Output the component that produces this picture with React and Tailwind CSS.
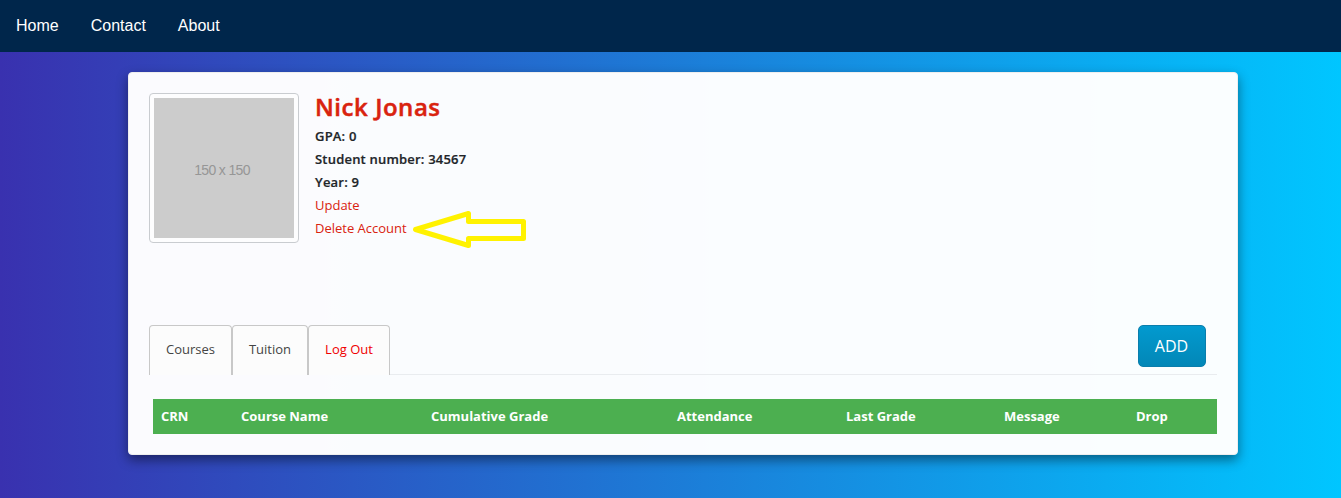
const details = ['GPA: 0', 'Student number: 34567', 'Year: 9'];

const columns = [
  ['CRN', 'w-[80px]'],
  ['Course Name', 'w-[190px]'],
  ['Cumulative Grade', 'w-[246px]'],
  ['Attendance', 'w-[169px]'],
  ['Last Grade', 'w-[158px]'],
  ['Message', 'w-[132px]'],
  ['Drop', 'w-[89px]'],
];

function NavBar() {
  return (
    <nav className="flex h-[52px] items-center gap-8 bg-[#00264b] px-4 font-['Liberation_Sans',sans-serif] text-base text-white">
      <a href="#home">Home</a>
      <a href="#contact">Contact</a>
      <a href="#about">About</a>
    </nav>
  );
}

function Arrow() {
  return (
    <svg className="absolute top-[117px] left-[262px]" width="120" height="42" viewBox="0 0 120 42" fill="none" stroke="#fff200" strokeWidth="5" strokeLinejoin="round">
      <path d="M4.500 19.500L57.500 3.500V11.500H112.500V28.500H57.500V35.500Z" />
    </svg>
  );
}

function Profile() {
  return (
    <section className="relative flex h-[232px] gap-4">
      <div className="size-[150px] shrink-0 rounded-[4px] border border-[#c9ccd0] bg-[#fdfdfe] p-1">
        <div className="flex size-full items-center justify-center bg-[#ccc] pt-[5px] pr-[4px] font-['Liberation_Sans',sans-serif] text-[14px] tracking-[-0.65px] text-[#969696]">
          150 x 150
        </div>
      </div>
      <div className="leading-[23px]">
        <h1 className="mb-[4px] h-[28px] text-2xl leading-[28px] font-semibold tracking-[0.55px] text-[#d9230f] [-webkit-text-stroke:0.5px_#d9230f]">Nick Jonas</h1>
        {details.map((line) => (
          <p key={line} className="font-semibold tracking-[0.2px] [-webkit-text-stroke:0.2px_#212529]">{line}</p>
        ))}
        <p><a href="#update" className="text-[#d9230f]">Update</a></p>
        <p><a href="#delete" className="text-[#d9230f]">Delete Account</a></p>
      </div>
      <Arrow />
    </section>
  );
}

function Tabs() {
  const tab = 'h-[50px] rounded-t-[4px] border border-b-0 border-[#c8c8c8] bg-[#fcfcfc] pb-[3px] text-center leading-[46px]';
  return (
    <div className="relative flex h-[50px] border-b border-[#e9ecef] text-[#444]">
      <button className={`${tab} w-[83px]`}>Courses</button>
      <button className={`${tab} w-[76px]`}>Tuition</button>
      <button className={`${tab} w-[82px] text-[#f00000]`}>Log Out</button>
      <button className="mr-[11px] ml-auto h-[42px] w-[68px] rounded-[5px] border border-[#0a7eac] bg-linear-to-b from-[#029acf] to-[#0287b7] pr-px text-base text-white">
        ADD
      </button>
    </div>
  );
}

export default function App() {
  return (
    <div className="h-[498px] overflow-hidden bg-[linear-gradient(to_right,#3931af,#00c6ff)] font-['Open_Sans',sans-serif] text-[13px] text-[#212529]">
      <NavBar />
      <main className="mt-5 ml-32 h-[383px] w-[1110px] rounded-[4px] border border-[#eeeeee] bg-white/98 p-5 shadow-[0_5px_12px_rgba(0,0,0,0.45)]">
        <Profile />
        <Tabs />
        <table className="mt-[24px] ml-1 h-[35px] w-[1064px] table-fixed bg-[#4caf50] text-left text-white">
          <thead>
            <tr>
              {columns.map(([label, width]) => (
                <th key={label} className={`${width} px-2 font-bold`}>{label}</th>
              ))}
            </tr>
          </thead>
        </table>
      </main>
    </div>
  );
}
